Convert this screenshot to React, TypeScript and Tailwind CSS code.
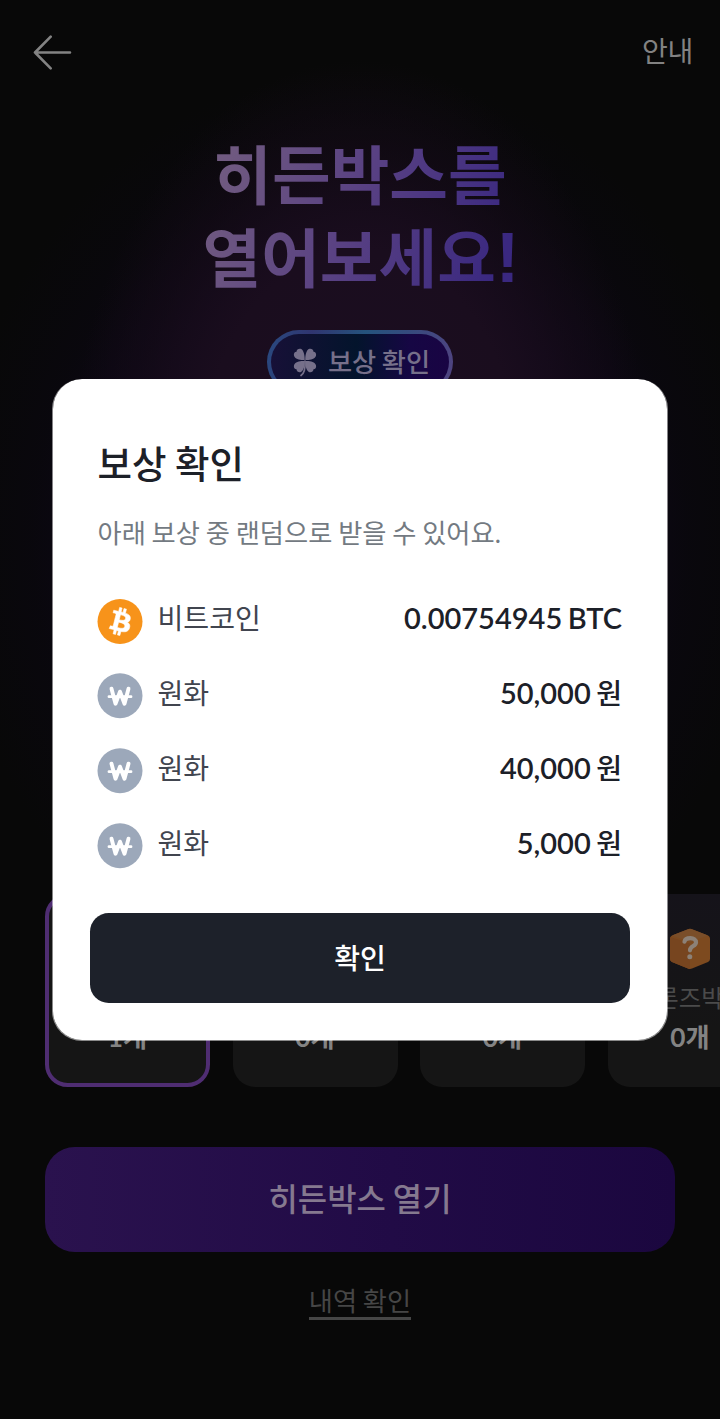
import React from "react";

const rewards = [
  { coin: "btc", name: "비트코인", value: "0.00754945", unit: "BTC" },
  { coin: "krw", name: "원화", value: "50,000", unit: "원" },
  { coin: "krw", name: "원화", value: "40,000", unit: "원" },
  { coin: "krw", name: "원화", value: "5,000", unit: "원" },
];

const boxes = [
  { name: "히든박스", count: "1개", selected: true },
  { name: "골드박스", count: "0개", selected: false },
  { name: "실버박스", count: "0개", selected: false },
  { name: "브론즈박스", count: "0개", selected: false },
];

function BackArrow() {
  return (
    <svg width="40" height="36" viewBox="0 0 40 36" fill="none" stroke="#838383" strokeWidth="2.6" strokeLinecap="round" strokeLinejoin="round">
      <path d="M38 18.5H3M18.700 2.700L3 18.500L18.700 34.300" />
    </svg>
  );
}

function Clover() {
  return (
    <svg width="24" height="29" viewBox="0 0 24 29" fill="#76708a">
      <path d="M11.7 12C8 12.5 2 11.500 1 7.800C.4 5.200 1.800 3.800 3.500 3.700C3.600 1.500 5.600.3 7.600.8C10.800 1.800 11.900 8 11.700 12Z" />
      <path d="M12.300 12C16 12.500 22 11.500 23 7.800C23.600 5.200 22.200 3.800 20.500 3.700C20.400 1.500 18.400.3 16.400.8C13.200 1.800 12.100 8 12.300 12Z" />
      <path d="M11.700 13C8 12.500 2 13.500 1 17.200C.4 19.800 1.800 21.200 3.500 21.300C3.600 23.500 5.600 24.700 7.600 24.200C10.800 23.200 11.900 17 11.700 13Z" />
      <path d="M12.300 13C16 12.500 22 13.500 23 17.200C23.600 19.800 22.200 21.200 20.500 21.300C20.400 23.500 18.400 24.700 16.400 24.200C13.200 23.200 12.100 17 12.300 13Z" />
      <path d="M12 13C12.500 20 11.500 25 8 27.500" fill="none" stroke="#76708a" strokeWidth="1.700" strokeLinecap="round" />
    </svg>
  );
}

function BitcoinIcon() {
  return (
    <svg width="45" height="45" viewBox="0.350 0 32 32" className="shrink-0 overflow-visible">
      <circle cx="16" cy="16" r="16" fill="#f7931a" />
      <path
        fill="#fff"
        stroke="#fff"
        strokeWidth="0.4"
        transform="translate(0.150 0)"
        d="M23.189 14.020c.314-2.096-1.283-3.223-3.465-3.975l.708-2.840-1.728-.43-.690 2.765c-.454-.114-.920-.220-1.385-.326l.695-2.783L15.596 6l-.708 2.839c-.376-.086-.746-.170-1.104-.260l.002-.009-2.384-.595-.460 1.846s1.283.294 1.256.312c.700.175.826.638.805 1.006l-.806 3.235c.048.012.110.030.180.057l-.183-.045-1.130 4.532c-.086.212-.303.531-.793.410.018.025-1.256-.313-1.256-.313l-.858 1.978 2.250.561c.418.105.828.215 1.231.318l-.715 2.872 1.727.430.708-2.840c.472.127.930.245 1.378.357l-.706 2.828 1.728.430.715-2.866c2.948.558 5.164.333 6.097-2.333.752-2.146-.037-3.385-1.588-4.192 1.130-.260 1.980-1.003 2.207-2.538zm-3.950 5.538c-.533 2.147-4.148.986-5.320.695l.950-3.805c1.172.293 4.929.872 4.370 3.110zm.535-5.569c-.487 1.953-3.495.960-4.470.717l.860-3.450c.975.243 4.118.696 3.610 2.733z"
      />
    </svg>
  );
}

function WonIcon() {
  return (
    <svg width="45" height="45" viewBox="0.500 0.800 45 45" fill="none" stroke="#fff" strokeLinecap="round" strokeLinejoin="round" className="shrink-0 overflow-visible">
      <circle cx="22.500" cy="22.500" r="22.500" fill="#9ca8ba" stroke="none" />
      <path strokeWidth="3.900" d="M14 15.500L18 30.500L22.500 18.500L27 30.500L31 15.500" />
      <path strokeWidth="2.800" d="M11.500 23.500H33.500" />
    </svg>
  );
}

function BoxIcon() {
  return (
    <svg width="42" height="42" viewBox="0 0 42 42">
      <path d="M19 1.200Q21 .3 23 1.200L39 7.600Q41 8.500 41 10.500V31Q41 33 39 34L23 40.500Q21 41.300 19 40.500L3 34Q1 33 1 31V10.500Q1 8.500 3 7.600Z" fill="#7d4a1f" />
      <path d="M1.500 9L21 15.500V41Q20 41 19 40.500L3 34Q1 33 1 31V10.500Z" fill="#77451f" />
      <path d="M3 7.600L19 1.200Q21 .3 23 1.200L39 7.600L21 14Z" fill="#7a4e29" />
      <path d="M15.500 13.600C16.500 9 26.800 8.800 27 14.300C27.100 18.500 21 17.500 21 22.300" fill="none" stroke="#8c8177" strokeWidth="4.200" strokeLinecap="round" />
      <circle cx="20.800" cy="28.800" r="2.500" fill="#8c8177" />
    </svg>
  );
}

function Page() {
  return (
    <div className="flex h-full w-full flex-col bg-[#080808] bg-[radial-gradient(ellipse_290px_420px_at_360px_480px,#1c0d22_0%,#1a0d1e_55%,rgba(23,12,25,0.55)_78%,rgba(16,10,18,0)_100%),radial-gradient(ellipse_410px_470px_at_360px_540px,#0e061c_0%,#0e071a_55%,rgba(10,7,16,0.6)_80%,rgba(8,8,8,0)_100%)]">
      <header className="flex h-[104px] shrink-0 items-center justify-between pl-8 pr-[27px]">
        <BackArrow />
        <span className="-mt-0.5 text-[28.1px] leading-10 tracking-[-0.3px] text-[#828282]">안내</span>
      </header>

      <h1 className="mx-auto mt-[26px] h-[165px] w-fit shrink-0 whitespace-nowrap bg-[linear-gradient(110deg,#705a80_8%,#594183_48%,#3a2880_92%)] bg-clip-text text-center font-['Noto_Sans_CJK_KR',sans-serif] text-[63.75px] font-bold leading-[82.5px] text-transparent">
        히든박스를
        <br />
        열어보세요<span className="font-['Liberation_Sans',sans-serif] text-[71px] leading-none tracking-[-2px]">!</span>
      </h1>

      <div className="mx-auto mt-[35px] h-[64px] w-[186px] shrink-0 rounded-full bg-[linear-gradient(100deg,#294a80_0%,#303570_23%,#25537d_50%,#354b7d_72%,#514381_100%)] p-1">
        <div className="flex h-full items-center justify-center gap-[11px] rounded-full bg-[linear-gradient(90deg,#171037_0%,#03142c_48%,#160744_78%,#190443_100%)] pl-[3px]">
          <Clover />
          <span className="text-[26.25px] font-medium leading-8 [word-spacing:-1px] text-[#76708a]">보상 확인</span>
        </div>
      </div>

      <div className="mt-[500px] flex h-[193px] shrink-0 gap-[22.5px] overflow-hidden pl-[45px]">
        {boxes.map((box) => (
          <div
            key={box.name}
            className={
              box.selected
                ? "flex w-[165px] shrink-0 flex-col items-center rounded-[22.5px] border-4 border-[#4f2d72] bg-[#151515] pt-[30px]"
                : "flex w-[165px] shrink-0 flex-col items-center rounded-[22.5px] bg-[linear-gradient(180deg,#15131a_0%,#151515_70%)] pt-[34px]"
            }
          >
            <BoxIcon />
            <span className="mt-[8px] whitespace-nowrap text-[24.4px] leading-10 text-[#4b4b4b]">{box.name}</span>
            <span className="text-[26.25px] font-bold leading-[38px] text-[#838383]">{box.count}</span>
          </div>
        ))}
      </div>

      <button className="mx-[45px] mt-[60px] h-[105px] shrink-0 rounded-[30px] bg-[linear-gradient(90deg,#2a124e_0%,#210b46_55%,#1b073f_100%)] text-[31.9px] font-medium [word-spacing:-1px] text-[#85798f]">
        히든박스 열기
      </button>
      <button className="mx-auto mt-[31px] h-[37px] shrink-0 border-b-[3px] border-[#464646] pt-[3px] text-[26.25px] leading-[31px] [word-spacing:-1px] text-[#464646]">
        내역 확인
      </button>
    </div>
  );
}

export default function App() {
  return (
    <div className="relative h-[1419px] w-[720px] overflow-hidden font-['Lato','Noto_Sans_CJK_KR',sans-serif]">
      <Page />
      <div className="absolute inset-0 flex items-start justify-center pt-[379px]">
        <section
          role="dialog"
          className="flex h-[662px] w-[616px] flex-col rounded-[30px] border-x border-b border-white/50 bg-white bg-clip-padding px-[37px] pb-[37px] pt-[60px]"
        >
          <h2 className="px-[7.5px] text-[37.5px] font-medium leading-[50px] [word-spacing:-1px] text-[#1c2028]">보상 확인</h2>
          <p className="mt-[25px] px-[7.5px] text-[26.25px] leading-[38px] [word-spacing:-0.9px] text-[#737a82]">
            아래 보상 중 랜덤으로 받을 수 있어요.
          </p>
          <ul className="mt-[47px] flex flex-col gap-[30px] px-[8px]">
            {rewards.map((r, i) => (
              <li key={i} className="flex h-[45px] items-center">
                {r.coin === "btc" ? <BitcoinIcon /> : <WonIcon />}
                <span className="-mt-2 ml-[14.5px] text-[28.1px] leading-10 text-[#41454f]">{r.name}</span>
                <span className="-mt-2 ml-auto text-[29px] font-semibold leading-10 [word-spacing:-1.8px] text-[#1c2028]">
                  {r.value}{" "}
                  <span className={r.unit === "BTC" ? "font-semibold" : "text-[28.1px] font-medium"}>{r.unit}</span>
                </span>
              </li>
            ))}
          </ul>
          <button className="mt-auto h-[90px] w-full shrink-0 rounded-[18.75px] bg-[#1d212a] text-[28.1px] font-medium text-white">
            확인
          </button>
        </section>
      </div>
    </div>
  );
}
